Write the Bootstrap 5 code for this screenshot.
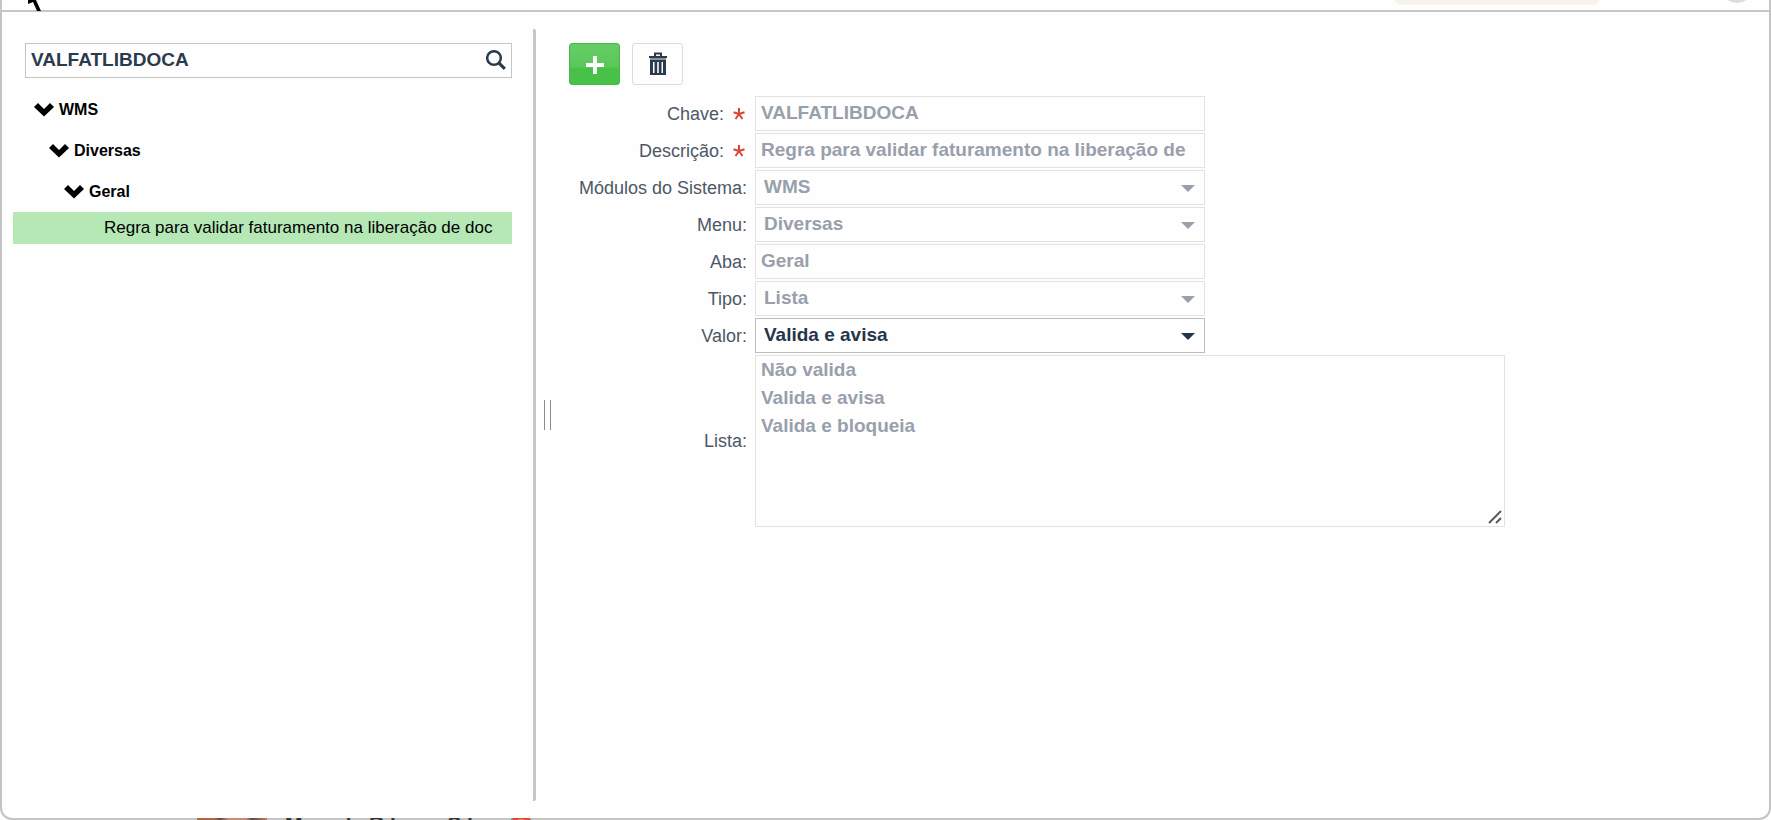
<!DOCTYPE html>
<html lang="pt-BR">
<head>
<meta charset="utf-8">
<meta name="viewport" content="width=device-width, initial-scale=1">
<title>Preferências</title>
<link href="https://cdn.jsdelivr.net/npm/bootstrap@5.3.0/dist/css/bootstrap.min.css" rel="stylesheet">
<style>
  body { font-family: "Liberation Sans", Arial, sans-serif; background: #fefefe; color: #000; }
  .topbar { height: 12px; padding-right: 16px; border: solid #c6c6c6; border-width: 0 2px 2px; overflow: hidden; }
  .pill { width: 206px; height: 30px; margin-top: -25px; margin-right: 121px; border-radius: 8px; background: #f7f3ec; }
  .avatar-dot { width: 32px; height: 32px; margin-top: -29px; border-radius: 50%; background: #dcdcdc; }
  .pointer { top: 0; left: 27px; }
  .window { border: 2px solid #c4c4c4; border-top: 0; border-radius: 0 0 12px 12px; background: #fefefe; padding: 17px 0; }
  .tree-pane { width: 534px; border-right: 3px solid #c6c6c6; border-radius: 2px; padding: 14px 21px 0 11px; }
  .search { margin-left: 12px; height: 35px; border: 1px solid #c5c5c5; }
  .search input { font-size: 19px; font-weight: 700; color: #2b3b4e; border: 0; padding: 0 0 2px 5px; line-height: 30px; background: transparent; box-shadow: none; }
  .search button { border: 0; padding: 0 5px 2px; line-height: 1; }
  .tree { margin-top: 11px; font-size: 16px; line-height: 20px; }
  .tree summary { list-style: none; font-weight: 700; height: 41px; padding: 10px 0; gap: 5px; display: flex; align-items: center; }
  .lv1 { margin-left: 21px; }
  .lv2 { margin-left: 36px; }
  .lv3 { margin-left: 51px; }
  .leaf { background: #b5e8b5; color: #000; height: 32px; line-height: 32px; padding-left: 91px; font-size: 17px; white-space: nowrap; }
  .grip { width: 7px; height: 30px; margin: 0 18px 0 8px; border: solid #8b8b8b; border-width: 0 1px; }
  .tool { width: 51px; height: 42px; padding: 0; border-radius: 3px; }
  .tool-add { border: 1px solid #46b946; background: linear-gradient(#66cd66 0, #5ac75a 58%, #48c148 60%, #48c148 100%); }
  .tool-del { border: 1px solid #dcdcdc; background: #fefefe; }
  .form-area { padding-top: 14px; min-width: 0; }
  .fields { margin-top: 11px; gap: 2px; }
  .field-name { width: 178px; font-size: 18px; line-height: 24px; color: #4c5866; text-align: right; white-space: nowrap; }
  .field-name svg { margin: 0 2px 0 4px; vertical-align: baseline; }
  .field-row { gap: 8px; }
  .entry { width: 450px; height: 35px; border: 1px solid #e2e2e2; border-radius: 0; padding: 0 8px 1px 5px; font-size: 19px; font-weight: 700; line-height: 28px; color: #98a0ab; background-color: #fefefe; }
  .entry:disabled { background-color: #fefefe; color: #98a0ab; opacity: 1; }
  select.entry { appearance: none; padding: 0 30px 1px 8px; background: #fefefe url("data:image/svg+xml,%3Csvg xmlns='http://www.w3.org/2000/svg' width='14' height='7'%3E%3Cpath fill='%2398a0ab' d='M0 0h14L7 7z'/%3E%3C/svg%3E") no-repeat right 9px top 14px; }
  select.entry-on { border-color: #bdbdbd; color: #25364a; background-image: url("data:image/svg+xml,%3Csvg xmlns='http://www.w3.org/2000/svg' width='14' height='7'%3E%3Cpath fill='%2325364a' d='M0 0h14L7 7z'/%3E%3C/svg%3E"); }
  .list-box { width: 750px; }
  textarea.entry { width: 100%; height: 172px; padding-top: 0; overflow: hidden; resize: none; display: block; }
  .corner { right: 3px; bottom: 3px; }
  .backdrop { height: 22px; bottom: -20px; left: 0; overflow: hidden; gap: 12px; padding-left: 197px; z-index: 2; }
  .photo { width: 70px; height: 22px; background: linear-gradient(90deg, #b5653f, #b5653f 25%, #6b4642 33%, #cf8b70 45%, #cf8b70 70%, #5d4a49 78%, #c77a62); }
  .person { font-size: 21px; font-weight: 700; line-height: 20px; margin: -4px 0 0 6px; color: #333; }
  .flag { width: 26px; height: 26px; margin-top: -3px; border-radius: 50%; background: #cfa163; border: 4px solid #e0473c; border-left-color: #2ba66b; }
</style>
</head>
<body>
<div class="d-flex flex-column vh-100 overflow-hidden position-relative">
  <header class="topbar d-flex justify-content-end flex-shrink-0">
    <div class="pill"></div>
    <div class="avatar-dot"></div>
  </header>
  <svg class="pointer position-absolute" width="16" height="12" aria-hidden="true"><path d="M1 0h8l5 11h-4L6 2 1 4z" fill="#000"/></svg>

  <main class="window d-flex flex-grow-1">
    <aside class="tree-pane flex-shrink-0">
      <div class="search d-flex align-items-center">
        <input class="form-control" type="text" aria-label="Pesquisar" value="VALFATLIBDOCA">
        <button class="btn" type="button" aria-label="Buscar">
          <svg width="20" height="20" viewBox="0 0 20 20" fill="none" stroke="#2b3b4e"><circle cx="8" cy="8" r="6.800" stroke-width="2.500"/><path d="M12.800 12.800l6 6" stroke-width="3.200"/></svg>
        </button>
      </div>
      <div class="tree">
        <details open>
          <summary class="lv1"><svg width="20" height="14" viewBox="0 0 20 14"><path d="M0 4l4-4 6 6 6-6 4 4-10 9.500z"/></svg>WMS</summary>
          <details open>
            <summary class="lv2"><svg width="20" height="14" viewBox="0 0 20 14"><path d="M0 4l4-4 6 6 6-6 4 4-10 9.500z"/></svg>Diversas</summary>
            <details open>
              <summary class="lv3"><svg width="20" height="14" viewBox="0 0 20 14"><path d="M0 4l4-4 6 6 6-6 4 4-10 9.500z"/></svg>Geral</summary>
              <div class="leaf">Regra para validar faturamento na liberação de doc</div>
            </details>
          </details>
        </details>
      </div>
    </aside>
    <div class="grip align-self-center"></div>
    <section class="form-area flex-grow-1">
      <div class="d-flex gap-2">
        <button class="btn tool tool-add me-1" type="button" aria-label="Adicionar">
          <svg width="20" height="20" viewBox="0 0 20 20"><path d="M8 1h4v7h7v4h-7v7H8v-7H1V8h7z" fill="#fff"/></svg>
        </button>
        <button class="btn tool tool-del" type="button" aria-label="Excluir">
          <svg width="18" height="24" viewBox="0 0 18 24"><path d="M6 4V1.500h6V4" fill="none" stroke="#2b3b4e" stroke-width="2"/><path d="M0 4h18v2H0z" fill="#2b3b4e"/><path d="M1 6h16v2H1z" fill="#8d939b"/><path d="M1 8h16v15H1zM4 10v11h1.500V10zM8.200 10v11h1.600V10zM12.500 10v11H14V10z" fill="#2b3b4e" fill-rule="evenodd"/></svg>
        </button>
      </div>
      <form class="fields d-flex flex-column">
        <div class="field-row d-flex align-items-center">
          <label class="field-name" for="chave">Chave: <svg width="12" height="12" viewBox="0 0 12 12" stroke="#dc4437" stroke-width="2"><path d="M6 6V0M6 6L.5 4.200M6 6l5.500-1.800M6 6l-3.500 5M6 6l3.500 5"/></svg></label>
          <input class="entry" id="chave" type="text" value="VALFATLIBDOCA" disabled>
        </div>
        <div class="field-row d-flex align-items-center">
          <label class="field-name" for="descricao">Descrição: <svg width="12" height="12" viewBox="0 0 12 12" stroke="#dc4437" stroke-width="2"><path d="M6 6V0M6 6L.5 4.200M6 6l5.500-1.800M6 6l-3.500 5M6 6l3.500 5"/></svg></label>
          <input class="entry" id="descricao" type="text" value="Regra para validar faturamento na liberação de" disabled>
        </div>
        <div class="field-row d-flex align-items-center">
          <label class="field-name" for="modulo">Módulos do Sistema:</label>
          <select class="entry" id="modulo" disabled><option>WMS</option></select>
        </div>
        <div class="field-row d-flex align-items-center">
          <label class="field-name" for="menu">Menu:</label>
          <select class="entry" id="menu" disabled><option>Diversas</option></select>
        </div>
        <div class="field-row d-flex align-items-center">
          <label class="field-name" for="aba">Aba:</label>
          <input class="entry" id="aba" type="text" value="Geral" disabled>
        </div>
        <div class="field-row d-flex align-items-center">
          <label class="field-name" for="tipo">Tipo:</label>
          <select class="entry" id="tipo" disabled><option>Lista</option></select>
        </div>
        <div class="field-row d-flex align-items-center">
          <label class="field-name" for="valor">Valor:</label>
          <select class="entry entry-on" id="valor"><option>Não valida</option><option selected>Valida e avisa</option><option>Valida e bloqueia</option></select>
        </div>
        <div class="field-row d-flex align-items-center">
          <label class="field-name" for="lista">Lista:</label>
          <div class="list-box position-relative">
            <textarea class="entry" id="lista" disabled>Não valida
Valida e avisa
Valida e bloqueia</textarea>
            <svg class="corner position-absolute" width="14" height="14" viewBox="0 0 14 14" stroke="#5a5a5e" stroke-width="2"><path d="M1 13L13 1M8 13l5-5"/></svg>
          </div>
        </div>
      </form>
    </section>
  </main>
  <div class="backdrop position-absolute d-flex" aria-hidden="true">
    <div class="photo"></div>
    <div class="person">Marcela Ribeiro Silva</div>
    <div class="flag"></div>
  </div>
</div>
<script src="https://cdn.jsdelivr.net/npm/bootstrap@5.3.0/dist/js/bootstrap.bundle.min.js"></script>
</body>
</html>
